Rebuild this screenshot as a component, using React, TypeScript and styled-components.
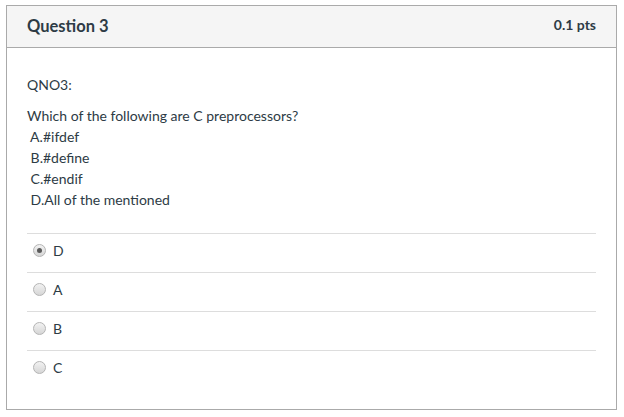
import React from 'react';
import styled, { createGlobalStyle } from 'styled-components';

const GlobalStyle = createGlobalStyle`
  html, body {
    margin: 0;
    padding: 0;
    background: #ffffff;
  }

  body {
    font-family: Lato, 'Open Sans', sans-serif;
    color: #2d3b45;
  }
`;

const Page = styled.div`
  padding: 5px 7px 7px 6px;
`;

const Card = styled.div`
  border: 1px solid #aaaaaa;
  background: #ffffff;
`;

const Header = styled.div`
  display: flex;
  align-items: center;
  justify-content: space-between;
  height: 41px;
  padding: 0 20px;
  background: #f5f5f5;
  border-bottom: 1px solid #aaaaaa;
`;

const Title = styled.div`
  font-size: 16.5px;
  font-weight: bold;
  margin-top: -1px;
`;

const Points = styled.div`
  font-size: 14px;
  font-weight: bold;
  margin-top: -5px;
`;

const Body = styled.div`
  padding: 26px 20px 20px;
`;

const Para = styled.p`
  margin: 0 0 10px;
  font-size: 14px;
  line-height: 21px;
`;

const Line = styled.div`
  white-space: pre;
`;

const Answers = styled.div`
  margin-top: 23px;
  display: flex;
  flex-direction: column;
`;

const AnswerRow = styled.label`
  display: flex;
  align-items: center;
  gap: 7px;
  padding: 9px 6px 14px;
  border-top: 1px solid #dddddd;
  font-size: 14px;
  line-height: 15px;
`;

const Radio = styled.span<{ $checked?: boolean }>`
  position: relative;
  width: 11px;
  height: 11px;
  border-radius: 50%;
  border: 1px solid #b4b4b4;
  background: linear-gradient(#f2f2f2, #d6d6d6);
  flex: none;

  &::after {
    content: '';
    display: ${p => (p.$checked ? 'block' : 'none')};
    position: absolute;
    left: 3px;
    top: 3px;
    width: 5px;
    height: 5px;
    border-radius: 50%;
    background: #5a5a5a;
  }
`;

const options = [
  { label: 'D', checked: true },
  { label: 'A' },
  { label: 'B' },
  { label: 'C' },
];

export default function App() {
  return (
    <Page>
      <GlobalStyle />
      <Card>
        <Header>
          <Title>Question 3</Title>
          <Points>0.1 pts</Points>
        </Header>
        <Body>
          <Para>QNO3:</Para>
          <Para>
            <Line>Which of the following are C preprocessors?</Line>
            <Line> A.#ifdef</Line>
            <Line> B.#define</Line>
            <Line> C.#endif</Line>
            <Line> D.All of the mentioned</Line>
          </Para>
          <Answers>
            {options.map(o => (
              <AnswerRow key={o.label}>
                <Radio $checked={o.checked} />
                {o.label}
              </AnswerRow>
            ))}
          </Answers>
        </Body>
      </Card>
    </Page>
  );
}
